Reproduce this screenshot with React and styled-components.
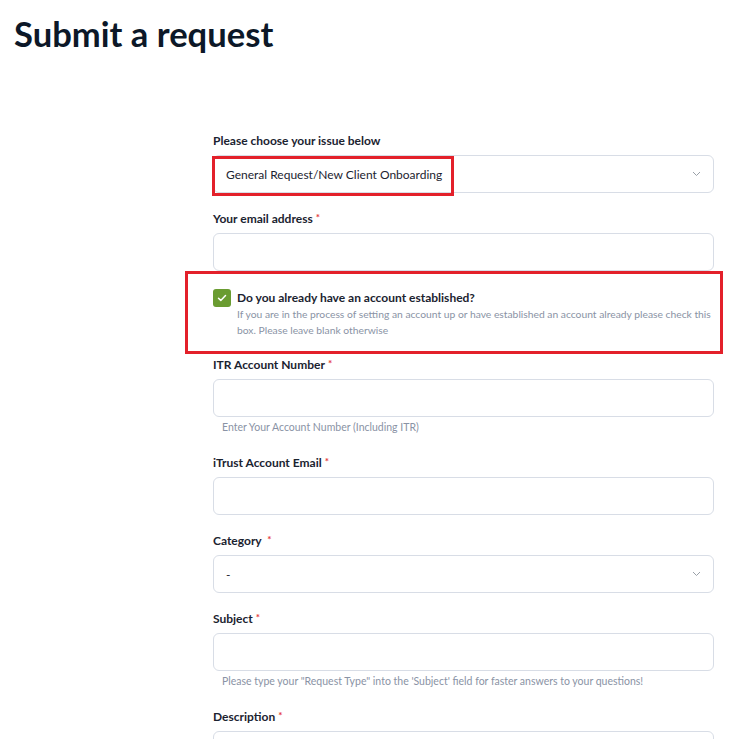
import React from "react";
import styled, { createGlobalStyle } from "styled-components";

const Global = createGlobalStyle`
  html, body { margin: 0; padding: 0; background: #fff; }
  body { font-family: "Lato", "Noto Sans", sans-serif; color: #1a2230; }
  * { box-sizing: border-box; }
`;

const Page = styled.div`
  width: 745px;
  padding: 14px 0 0 0;
`;

const Title = styled.h1`
  margin: 0 0 0 14px;
  font-size: 34.6px;
  line-height: 40px;
  font-weight: 700;
  color: #0c1828;
  letter-spacing: 0;
`;

const Form = styled.form`
  margin: 78px 31px 0 213px;
  display: flex;
  flex-direction: column;
`;

const Field = styled.div`
  position: relative;
  display: flex;
  flex-direction: column;
  margin-bottom: ${(p) => (p.$hint ? 19 : 17)}px;
`;

const Label = styled.label`
  font-size: 12px;
  line-height: 18px;
  font-weight: 700;
  color: #1b2330;
  margin-bottom: 5px;
`;

const Req = styled.span`
  color: #e5393b;
  font-size: 10px;
  vertical-align: top;
  line-height: 14px;
  margin-left: 3px;
`;

const Input = styled.div`
  height: ${(p) => p.$height || 38}px;
  border: 1px solid #d8dde6;
  border-radius: 6px;
  background: #fff;
`;

const SelectBox = styled.div`
  position: relative;
  height: 38px;
  border: 1px solid #d8dde6;
  border-radius: 6px;
  background: #fff;
  display: flex;
  align-items: center;
  justify-content: space-between;
  padding: 0 12px 0 12px;
  font-size: 12px;
  color: #1b2330;
`;

const Chevron = styled.svg`
  width: 9px;
  height: 6px;
  flex: none;
`;

const Hint = styled.div`
  margin-top: 2px;
  padding-left: 9px;
  font-size: 10.5px;
  line-height: 16px;
  color: #8a93a5;
`;

const Highlight = styled.div`
  position: absolute;
  border: 3px solid #e3202a;
  pointer-events: none;
  top: ${(p) => p.$top}px;
  left: ${(p) => p.$left}px;
  width: ${(p) => (p.$width ? `${p.$width}px` : "auto")};
  right: ${(p) => (p.$right !== undefined ? `${p.$right}px` : "auto")};
  height: ${(p) => (p.$height ? `${p.$height}px` : "auto")};
  bottom: ${(p) => (p.$bottom !== undefined ? `${p.$bottom}px` : "auto")};
`;

const SelectWrap = styled.div`
  position: relative;
`;

const CheckField = styled.div`
  position: relative;
  display: flex;
  gap: 6px;
  margin-top: 1px;
  margin-bottom: 18px;
`;

const Box = styled.div`
  width: 18px;
  height: 18px;
  flex: none;
  border-radius: 3px;
  background: #6a9c31;
  display: flex;
  align-items: center;
  justify-content: center;
`;

const CheckText = styled.div`
  display: flex;
  flex-direction: column;
`;

const CheckTitle = styled.div`
  font-size: 12px;
  line-height: 18px;
  font-weight: 700;
  color: #1b2330;
`;

const CheckDesc = styled.div`
  font-size: 10.3px;
  line-height: 16px;
  color: #8a93a5;
  margin-top: -1px;
`;

function Select({ value }) {
  return (
    <SelectBox>
      <span>{value}</span>
      <Chevron viewBox="0 0 9 6">
        <path d="M1 1l3.5 3.5L8 1" fill="none" stroke="#9aa0a8" strokeWidth="1" />
      </Chevron>
    </SelectBox>
  );
}

export default function App() {
  return (
    <Page>
      <Global />
      <Title>Submit a request</Title>
      <Form>
        <Field>
          <Label>Please choose your issue below</Label>
          <SelectWrap>
            <Select value="General Request/New Client Onboarding" />
            <Highlight $top={1} $left={-1} $width={242} $height={40} />
          </SelectWrap>
        </Field>

        <Field>
          <Label>
            Your email address<Req>*</Req>
          </Label>
          <Input />
        </Field>

        <CheckField>
          <Box>
            <svg width="10" height="8" viewBox="0 0 10 8">
              <path d="M1.5 4.2l2.3 2.2L8.5 1.6" fill="none" stroke="#fff" strokeWidth="1.5" strokeLinecap="round" strokeLinejoin="round" />
            </svg>
          </Box>
          <CheckText>
            <CheckTitle>Do you already have an account established?</CheckTitle>
            <CheckDesc>
              If you are in the process of setting an account up or have established an account already please check this box. Please leave blank otherwise
            </CheckDesc>
          </CheckText>
          <Highlight $top={-18} $left={-28} $right={-9} $bottom={-16} />
        </CheckField>

        <Field $hint>
          <Label>
            ITR Account Number<Req>*</Req>
          </Label>
          <Input />
          <Hint>Enter Your Account Number (Including ITR)</Hint>
        </Field>

        <Field>
          <Label>
            iTrust Account Email<Req>*</Req>
          </Label>
          <Input />
        </Field>

        <Field>
          <Label>
            Category <Req>*</Req>
          </Label>
          <Select value="-" />
        </Field>

        <Field $hint>
          <Label>
            Subject<Req>*</Req>
          </Label>
          <Input />
          <Hint>Please type your "Request Type" into the 'Subject' field for faster answers to your questions!</Hint>
        </Field>

        <Field>
          <Label>
            Description<Req>*</Req>
          </Label>
          <Input $height={120} />
        </Field>
      </Form>
    </Page>
  );
}
